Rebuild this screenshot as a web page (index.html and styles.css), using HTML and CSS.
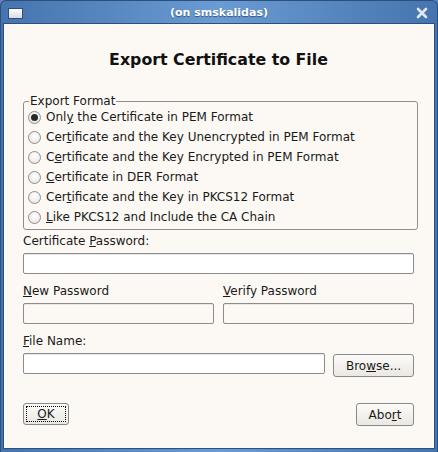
FILE: index.html
```html
<!DOCTYPE html>
<html>
<head>
<meta charset="utf-8">
<link rel="stylesheet" href="styles.css">
</head>
<body>
<div class="window">
  <div class="titlebar">
    <span class="win-icon"></span>
    <span class="title">(on smskalidas)</span>
    <svg class="close" width="12" height="12" viewBox="0 0 12 12"><path d="M2 2 L10 10 M10 2 L2 10" stroke="#dfe8f4" stroke-width="2.6" stroke-linecap="round"/></svg>
  </div>
  <div class="content">
    <h1 class="heading">Export Certificate to File</h1>
    <fieldset class="group">
      <legend class="legend">Export Format</legend>
      <label class="radio-row"><span class="radio checked"></span><span>Onl<u>y</u> the Certificate in PEM Format</span></label>
      <label class="radio-row"><span class="radio"></span><span>Cer<u>t</u>ificate and the Key Unencrypted in PEM Format</span></label>
      <label class="radio-row"><span class="radio"></span><span>C<u>e</u>rtificate and the Key Encrypted in PEM Format</span></label>
      <label class="radio-row"><span class="radio"></span><span><u>C</u>ertificate in DER Format</span></label>
      <label class="radio-row"><span class="radio"></span><span>Cer<u>t</u>ificate and the Key in PKCS12 Format</span></label>
      <label class="radio-row"><span class="radio"></span><span><u>L</u>ike PKCS12 and Include the CA Chain</span></label>
    </fieldset>
    <div class="field first">
      <div class="label">Certificate <u>P</u>assword:</div>
      <div class="input"></div>
    </div>
    <div class="pair">
      <div class="field">
        <div class="label"><u>N</u>ew Password</div>
        <div class="input cream"></div>
      </div>
      <div class="field">
        <div class="label"><u>V</u>erify Password</div>
        <div class="input cream"></div>
      </div>
    </div>
    <div class="field">
      <div class="label"><u>F</u>ile Name:</div>
      <div class="file-row">
        <div class="input grow"></div>
        <button class="btn browse">Bro<u>w</u>se...</button>
      </div>
    </div>
    <div class="actions">
      <button class="btn ok"><span class="focus"><u>O</u>K</span></button>
      <button class="btn abort">Abo<u>r</u>t</button>
    </div>
  </div>
</div>
</body>
</html>
```
FILE: styles.css
```css
* { box-sizing: border-box; }
html, body { margin: 0; padding: 0; }
body {
  width: 438px;
  height: 452px;
  background: #5a86bd;
  font-family: "DejaVu Sans", sans-serif;
  font-size: 12px;
  color: #1a1a1a;
  overflow: hidden;
}
.window {
  width: 438px;
  height: 452px;
  display: flex;
  flex-direction: column;
  background: linear-gradient(90deg, #4674ae 0%, #6a9bd2 50%, #4674ae 100%);
  border-radius: 6px 6px 0 0;
  border: 1px solid #2c4f7e;
  border-bottom: none;
  padding: 0 2px 3px 2px;
}
.titlebar {
  height: 22px;
  display: flex;
  align-items: center;
  position: relative;
  color: #fff;
}
.win-icon {
  position: absolute;
  left: 5px;
  top: 7px;
  width: 15px;
  height: 11px;
  border: 1px solid #2f4f78;
  background: linear-gradient(#fdfdfd, #d8dde4);
}
.title {
  flex: 1;
  text-align: center;
  font-weight: bold;
  font-size: 11px;
  text-shadow: 0 1px 1px #33557f;
}
.close {
  position: absolute;
  right: 7px;
  top: 6px;
}
.content {
  flex: 1;
  background: #fcf9f4;
  border: 1px solid #2d4f7e;
  padding: 0 20px 0 19px;
  display: flex;
  flex-direction: column;
}
.heading {
  margin: 25px 0 0 0;
  font-size: 15.8px;
  font-weight: bold;
  text-align: center;
  height: 22px;
  line-height: 22px;
  color: #111;
}
.group {
  margin: 24px -4px 0 0;
  padding: 0 0 2px 4px;
  border: 1px solid #8f8f8f;
  border-radius: 3px;
  display: flex;
  flex-direction: column;
}
.legend {
  padding: 0 1px;
  margin-left: 1px;
  line-height: 12px;
}
.radio-row {
  display: flex;
  align-items: center;
  height: 20px;
  gap: 5px;
}
.radio {
  width: 13px;
  height: 13px;
  border-radius: 50%;
  border: 1px solid #8d8d8d;
  background: radial-gradient(circle at 50% 35%, #ffffff 0%, #f0eeea 60%, #dcdad5 100%);
  position: relative;
  flex: none;
}
.radio.checked::after {
  content: "";
  position: absolute;
  left: 2px;
  top: 2px;
  width: 7px;
  height: 7px;
  border-radius: 50%;
  background: #2a2a2a;
}
.field {
  display: flex;
  flex-direction: column;
  margin-top: 10px;
}
.field.first { margin-top: 4px; }
.label {
  height: 15px;
  line-height: 15px;
  margin-bottom: 4px;
}
.input {
  height: 21px;
  border: 1px solid #8c8c8c;
  border-radius: 2px;
  background: #fff;
  box-shadow: inset 0 1px 0 #e8e8e8;
}
.input.cream { background: #fcf9f4; }
.pair {
  display: grid;
  grid-template-columns: 1fr 1fr;
  gap: 9px;
}
.file-row {
  display: flex;
  gap: 8px;
  align-items: flex-start;
}
.grow { flex: 1; }
.btn {
  font-family: "DejaVu Sans", sans-serif;
  font-size: 12px;
  color: #1a1a1a;
  border: 1px solid #8a8a8a;
  border-radius: 3px;
  background: linear-gradient(#fcfbf9, #ebe8e2);
  padding: 0;
  height: 23px;
}
.browse { width: 81px; margin-top: 1px; }
.actions {
  display: flex;
  justify-content: space-between;
  margin-top: 26px;
}
.ok {
  width: 46px;
  height: 22px;
  display: flex;
  align-items: center;
  justify-content: center;
  padding: 2px;
}
.focus {
  display: block;
  width: 100%;
  height: 100%;
  border: 1px dotted #000;
  line-height: 15px;
}
.abort { width: 58px; }
```
